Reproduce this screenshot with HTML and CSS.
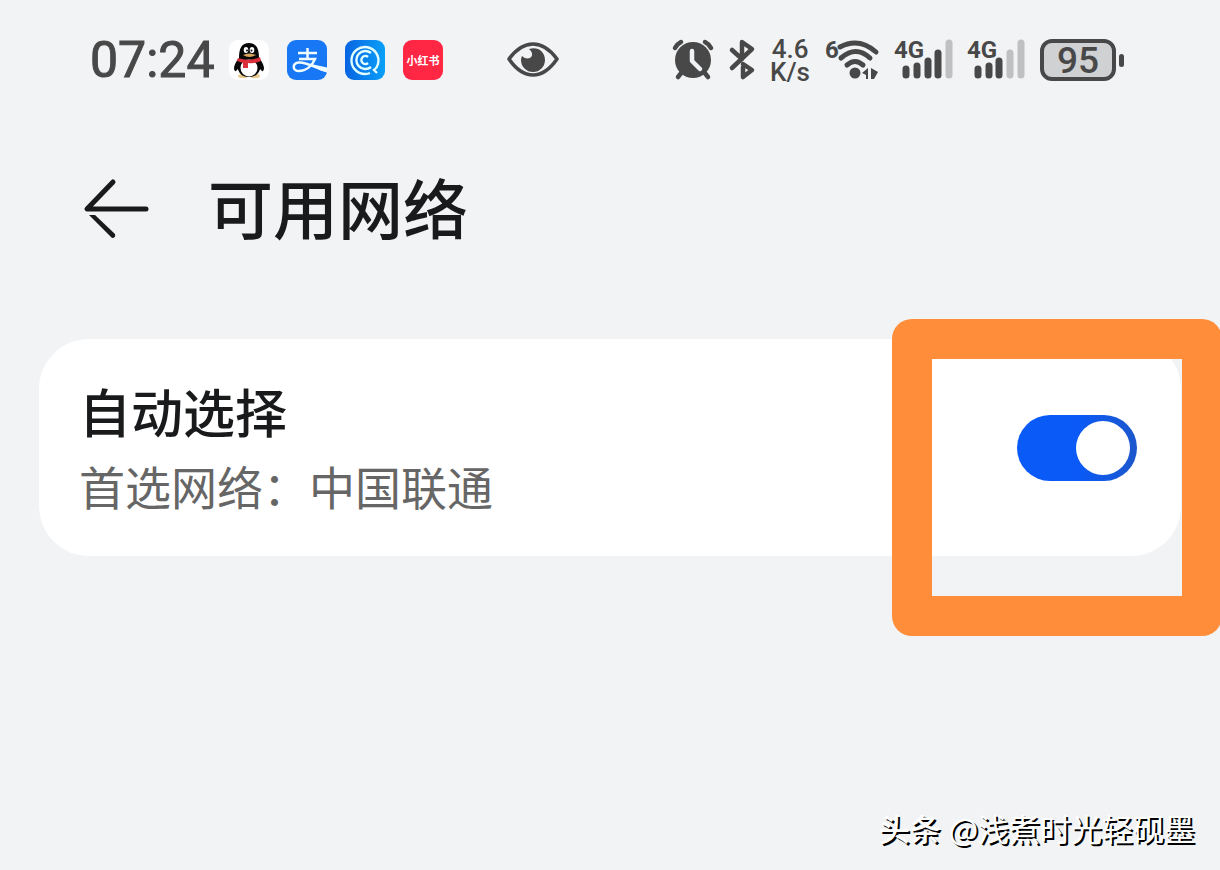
FILE: index.html
```html
<!DOCTYPE html>
<html lang="zh-CN">
<head>
<meta charset="utf-8">
<meta name="viewport" content="width=device-width, initial-scale=1">
<title>可用网络</title>
<link rel="stylesheet" href="styles.css">
</head>
<body>
<div class="screen">
  <div class="status">
    <time class="clock">07:24</time>
    <div class="apps">
      <svg width="40" height="40" viewBox="0 0 40 40" role="img" aria-label="QQ">
        <rect width="40" height="40" rx="9" fill="#fff"/>
        <ellipse cx="14" cy="36" rx="5" ry="2" fill="#e8c98c"/><ellipse cx="26" cy="36" rx="5" ry="2" fill="#e8c98c"/>
        <path d="M9 19C5 25 4 29 6 31C7 32 9 29 10 27ZM31 19C35 25 36 29 34 31C33 32 31 29 30 27Z" fill="#080808"/>
        <path d="M10 18C10 8 13 3 20 3S30 8 30 18C34 28 30 37 20 37S6 28 10 18Z" fill="#080808"/>
        <ellipse cx="20" cy="28" rx="8.500" ry="8.500" fill="#fff"/>
        <ellipse cx="17" cy="10" rx="2.300" ry="3" fill="#fff"/><ellipse cx="23" cy="10" rx="2.300" ry="3" fill="#fff"/>
        <circle cx="18" cy="10.500" r="1" fill="#080808"/><circle cx="22.500" cy="10.500" r="1" fill="#080808"/>
        <path d="M14 15Q20 12 27 15Q20 19 14 15Z" fill="#d9a45c"/>
        <path d="M9 18Q20 22 31 17L32 21Q26 24 19 23V28H14V23L8 21Z" fill="#d9303c"/>
      </svg>
      <svg width="40" height="40" viewBox="0 0 40 40" role="img" aria-label="支付宝">
        <rect width="40" height="40" rx="9" fill="#1777f5"/>
        <path d="M11 13H30M20.500 8V19M12 19H28C25 26 19 31 12 31C5 31 5 23 12 22.500C20 22 28 28 40 31" fill="none" stroke="#effcff" stroke-width="2.500"/>
        <path d="M24 24L40 27.500V32.500Q32 30 24 26Z" fill="#effcff"/>
      </svg>
      <svg width="40" height="40" viewBox="0 0 40 40" role="img" aria-label="浏览器">
        <defs><linearGradient id="blue"><stop offset="0" stop-color="#0864e2"/><stop offset="1" stop-color="#0aa0f8"/></linearGradient></defs>
        <rect width="40" height="40" rx="9" fill="url(#blue)"/>
        <g fill="none" stroke="#dffcff" stroke-width="2.400">
          <path d="M25 33Q23 34 20 34A13.500 13.500 0 1 1 33 24Q32 28 29 30L32 33"/>
          <path d="M26 13A9 9 0 1 0 26 27"/>
          <path d="M23 17A4 4 0 1 0 23 23"/>
        </g>
      </svg>
      <svg width="40" height="40" viewBox="0 0 40 40" role="img" aria-label="小红书">
        <rect width="40" height="40" rx="9" fill="#ff2744"/>
        <text class="app-name" x="20" y="25" text-anchor="middle">小红书</text>
      </svg>
    </div>
    <svg class="eye" width="52" height="36" viewBox="0 0 52 36" aria-hidden="true">
      <path d="M2 17Q13 2 26 2T50 17Q39 33 26 33T2 17Z" fill="none" stroke="#484848" stroke-width="3.600" stroke-linejoin="round"/>
      <path d="M22 7C30 4 38 9 38 18A12 12 0 0 1 14 18Q14 16 15 14C21 20 30 14 22 7Z" fill="#484848"/>
    </svg>
    <div class="signals">
      <svg width="42" height="42" viewBox="0 0 42 42" aria-hidden="true">
        <g fill="none" stroke="#484848" stroke-width="4.500" stroke-linecap="round"><path d="M3 9Q5 5 9 3M33 3Q37 5 39 9M10 33L6 38M32 33L36 38"/></g>
        <circle cx="21" cy="21" r="18" fill="#484848"/>
        <path d="M20 12V22L28 30" fill="none" stroke="#f1f3f5" stroke-width="4.500" stroke-linecap="round" stroke-linejoin="round"/>
      </svg>
      <svg width="26" height="42" viewBox="0 0 26 42" aria-hidden="true">
        <path d="M3 11L13 20V3L23 10L3 29M14 25L23 31L14 38V28" fill="none" stroke="#484848" stroke-width="4.500" stroke-linecap="round" stroke-linejoin="round"/>
      </svg>
      <div class="speed"><span>4.6</span><span>K/s</span></div>
      <svg width="54" height="52" viewBox="0 -4 54 52" aria-hidden="true">
        <text class="net" x="0" y="20">6</text>
        <g fill="none" stroke="#484848" stroke-width="5" stroke-linecap="round"><path d="M15 9Q34 -1 51 14M16 20Q31 7 45 20M22 27Q30 20 38 27"/></g>
        <circle cx="30" cy="35" r="5.500" fill="#484848"/>
        <path d="M37 35L43 30V41H41V37ZM46 30L53 34L49 41H46Z" fill="#484848"/>
      </svg>
      <svg width="58" height="52" viewBox="0 -4 58 52" aria-hidden="true">
        <text class="net" x="0" y="20">4G</text>
        <g fill="none" stroke="#484848" stroke-width="7" stroke-linecap="round"><path d="M12 31V37M23 28V37M34 23V37M44 15V37"/><path d="M55 5V37" stroke="#bfc0c1"/></g>
      </svg>
      <svg width="58" height="52" viewBox="0 -4 58 52" aria-hidden="true">
        <text class="net" x="0" y="20">4G</text>
        <g fill="none" stroke="#484848" stroke-width="7" stroke-linecap="round"><path d="M11 31V37M22 28V37M32 23V37"/><path d="M43 15V37M54 5V37" stroke="#bfc0c1"/></g>
      </svg>
      <div class="battery"><span class="level">95</span><span class="tip"></span></div>
    </div>
  </div>

  <header class="header">
    <button class="back" type="button" aria-label="返回">
      <svg width="68" height="64" viewBox="0 0 68 64" aria-hidden="true"><path d="M31 4L5 31H64" fill="none" stroke="#191a1b" stroke-width="5" stroke-linecap="round" stroke-linejoin="round"/><path d="M7 37H13L33 56Q34 60 30 60Z" fill="#191a1b"/></svg>
    </button>
    <h1 class="title">可用网络</h1>
  </header>

  <main class="card">
    <label class="labels" for="auto">
      <span class="name">自动选择</span>
      <span class="detail">首选网络：中国联通</span>
    </label>
    <input class="switch" id="auto" type="checkbox" role="switch" checked>
    <div class="highlight"></div>
  </main>

  <footer class="credit"><span class="source">头条</span><span>@浅煮时光轻砚墨</span></footer>
</div>
</body>
</html>
```
FILE: styles.css
```css
* { box-sizing: border-box; }

body {
  margin: 0;
  background: #f1f3f5;
  color: #191a1b;
  font-family: Roboto, "Noto Sans CJK SC", sans-serif;
}

.screen {
  display: flex;
  flex-direction: column;
  min-height: 100vh;
  overflow: hidden;
}

.status {
  display: flex;
  align-items: center;
  height: 120px;
  padding: 0 96px 0 90px;
  color: #484848;
}

svg { display: block; flex: none; overflow: visible; }

.clock { font-size: 50px; line-height: 60px; -webkit-text-stroke: 1px #484848; }

.apps { display: flex; gap: 18px; margin-left: 14px; }

.app-name { fill: #fff; font: 700 11px "Noto Sans CJK SC", sans-serif; }

.eye { margin-left: 64px; }

.signals {
  display: flex;
  align-items: center;
  gap: 15px;
  margin-left: auto;
}

.speed {
  display: flex;
  flex-direction: column;
  align-items: center;
  padding-top: 2px;
  font-size: 26px;
  font-weight: 500;
  line-height: 23px;
}

.net { fill: #484848; font: 700 24px Roboto, sans-serif; }

.battery { display: flex; align-items: center; gap: 3px; }

.level {
  width: 76px;
  height: 42px;
  border: 4px solid #484848;
  border-radius: 12px;
  background: #d0d1d2;
  font-size: 37px;
  font-weight: 500;
  line-height: 36px;
  text-align: center;
}

.tip { width: 5px; height: 13px; border-radius: 3px; background: #484848; }

.header {
  display: flex;
  align-items: center;
  gap: 58px;
  height: 180px;
  padding: 0 82px;
}

.back { padding: 0; border: 0; background: none; }

.title {
  margin: 0;
  padding-bottom: 8px;
  font-family: "Noto Sans CJK SC", sans-serif;
  font-size: 65px;
  font-weight: 500;
  line-height: 80px;
}

.card {
  position: relative;
  display: flex;
  align-items: center;
  justify-content: space-between;
  margin: 39px 39px 0;
  padding: 34px 44px 34px 40px;
  border-radius: 50px;
  background: #fff;
}

.labels {
  display: flex;
  flex-direction: column;
  font-family: "Noto Sans CJK SC", sans-serif;
}

.name { font-size: 52px; font-weight: 500; line-height: 75px; }

.detail { color: #666; font-size: 46px; line-height: 74px; }

.switch {
  appearance: none;
  display: flex;
  align-items: center;
  justify-content: flex-end;
  width: 120px;
  height: 66px;
  margin: 0;
  padding: 7px;
  border-radius: 33px;
  background: linear-gradient(90deg, #0a5af8 50%, #1c57cc);
}

.switch::before {
  content: "";
  width: 54px;
  height: 54px;
  border-radius: 50%;
  background: #fff;
}

.switch:not(:checked) { justify-content: flex-start; background: #c8c9cb; }

.highlight {
  position: absolute;
  top: -20px;
  right: -41px;
  bottom: -80px;
  width: 330px;
  background:
    linear-gradient(#ff8d3a, #ff8d3a) top / 100% 40px no-repeat,
    linear-gradient(#ff8d3a, #ff8d3a) bottom / 100% 40px no-repeat,
    linear-gradient(#ff8d3a, #ff8d3a) left / 40px 100% no-repeat,
    linear-gradient(#ff8d3a, #ff8d3a) right / 40px 100% no-repeat;
  border-radius: 20px;
  pointer-events: none;
}

.credit {
  display: flex;
  justify-content: flex-end;
  gap: 8px;
  margin-top: auto;
  padding: 0 25px 19px;
  color: #fff;
  font-family: "Noto Sans CJK SC", sans-serif;
  font-size: 31px;
  line-height: 46px;
  text-shadow: 2px 2px 0 #000;
}

.source { font-weight: 500; }
```
